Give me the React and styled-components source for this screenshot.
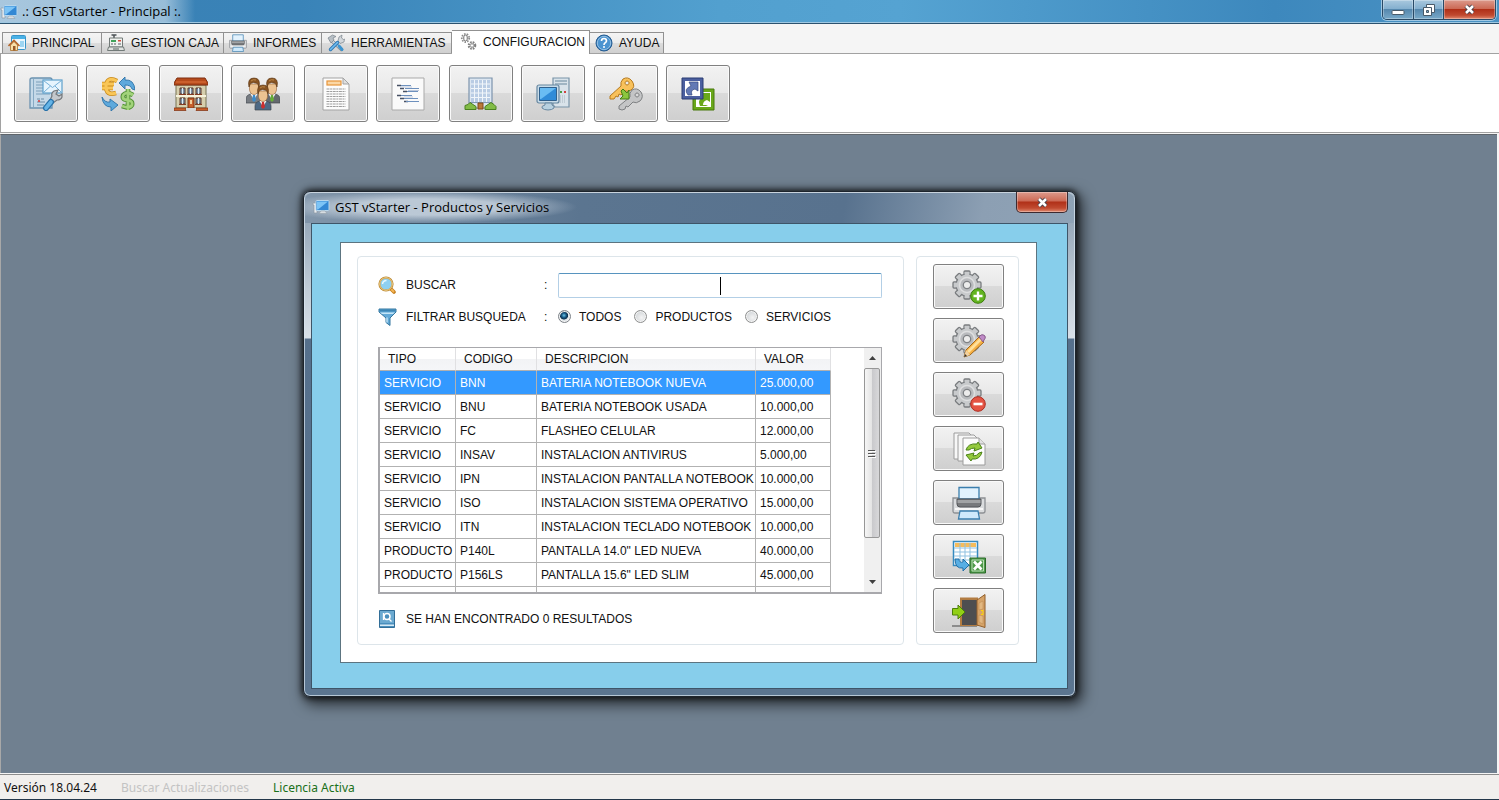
import { useState } from "react";
import styled, { createGlobalStyle, css } from "styled-components";

const GlobalStyle = createGlobalStyle`
  * {
    box-sizing: border-box;
  }

  body {
    margin: 0;
    font-family: Arial, "Liberation Sans", sans-serif;
    font-size: 12px;
    color: #111;
  }

  button,
  input {
    font: inherit;
  }

  svg {
    display: block;
    flex: none;
  }
`;

const Shell = styled.div`
  min-height: 100vh;
  display: flex;
  flex-direction: column;
  background: #f5f5f5;
  border-bottom: 1px solid #24374a;
`;

const TitleBar = styled.header`
  height: 24px;
  display: flex;
  align-items: flex-start;
  justify-content: space-between;
  padding-right: 3px;
  border-bottom: 1px solid #2b526f;
  box-shadow: inset 0 -1px 0 #9fc8e2;
  background:
    linear-gradient(90deg, rgba(215, 229, 240, 0.7) 0, rgba(215, 229, 240, 0.6) 165px, transparent 195px),
    linear-gradient(90deg, #3a80b3 0%, #3983b8 20%, #52a0cf 48%, #55a3d2 60%, #3d88bd 85%, #4b93c4 100%);
`;

const WindowTitle = styled.h1`
  margin: 0;
  display: flex;
  align-items: center;
  gap: 4px;
  height: 23px;
  font: 400 13px/23px "Open Sans", "Noto Sans", sans-serif;
  color: #000;
`;

const WindowControls = styled.div`
  display: flex;
  height: 20px;
  border: 1px solid #2a4a66;
  border-top: 0;
  border-radius: 0 0 5px 5px;
  box-shadow: 0 0 0 1px rgba(220, 238, 250, 0.6);
  overflow: hidden;
`;

const ControlButton = styled.button`
  width: ${(p) => (p.$close ? 52 : 30)}px;
  padding: 0;
  border: 0;
  border-left: ${(p) => (p.$first ? 0 : "1px solid #2a4a66")};
  display: grid;
  place-items: center;
  background: ${(p) =>
    p.$close
      ? "linear-gradient(#dc9a8c 0%, #cc6a55 45%, #b03018 50%, #c04a30 80%, #e08a70 100%)"
      : "linear-gradient(#a9c8de 0%, #85b0cf 45%, #5688ae 50%, #79a9c9 100%)"};
  box-shadow: inset 0 0 0 1px rgba(255, 255, 255, 0.3);
`;

const TabStrip = styled.nav`
  display: flex;
  align-items: flex-end;
  height: 30px;
  padding-left: 2px;
  border-bottom: 1px solid #a2a2a2;
`;

const Tab = styled.button`
  display: flex;
  align-items: center;
  gap: 6px;
  width: ${(p) => p.$width}px;
  height: 21px;
  padding: 0 0 0 5px;
  border: 1px solid #919191;
  border-left-width: ${(p) => (p.$first ? 1 : 0)}px;
  border-bottom: 0;
  background: linear-gradient(#f4f4f4 0%, #ececec 50%, #dcdcdc 51%, #d0d0d0 100%);
  color: #111;
  white-space: nowrap;

  ${(p) =>
    p.$active &&
    css`
      height: 24px;
      margin-bottom: -1px;
      padding: 0 0 2px 8px;
      background: #fff;
    `}
`;

const Toolbar = styled.div`
  background: #fff;
  padding: 11px 13px 10px;
  border-left: 1px solid #a2a2a2;
  border-bottom: 1px solid #a2a2a2;
`;

const ToolRow = styled.div`
  display: flex;
  justify-content: space-between;
  width: 716px;
  max-width: 100%;
`;

const GlossButton = styled.button`
  display: grid;
  place-items: center;
  padding: 0;
  border: 1px solid #808080;
  border-radius: 3px;
  box-shadow: inset 0 0 0 1px #fafafa;
  background: linear-gradient(#f2f2f2 0%, #e8e8e8 49%, #dadada 50%, #cfcfcf 100%);
`;

const ToolButton = styled(GlossButton)`
  width: 64px;
  height: 57px;
`;

const Desktop = styled.main`
  position: relative;
  flex: 1;
  margin: 1px 2px 1px 0;
  background: #708090;
  border-top: 1px solid #5f656b;
  border-left: 1px solid #a8a8a8;
  overflow: hidden;
`;

const StatusBar = styled.footer`
  display: flex;
  gap: 24px;
  height: 25px;
  padding-left: 4px;
  border-top: 1px solid #8c8c8c;
  background: #f1efed;
  font: 12px/25px "Noto Sans", "Open Sans", sans-serif;
`;

const StatusText = styled.span`
  color: ${(p) => p.$color};
`;

const Dialog = styled.section`
  position: absolute;
  left: 302px;
  top: 56px;
  width: 773px;
  padding: 0 7px 7px;
  border: 1px solid #1d242c;
  border-radius: 7px;
  background: linear-gradient(#8599ad 0, #c3ced8 100px, #d8e0e8 146px, #56708c 147px, #5b7590 100%);
  box-shadow:
    inset 0 0 0 1px rgba(220, 232, 242, 0.7),
    0 0 6px 1px rgba(0, 0, 0, 0.8),
    4px 5px 14px 3px rgba(0, 0, 0, 0.6);
`;

const DialogTitleBar = styled.div`
  display: flex;
  justify-content: space-between;
  align-items: flex-start;
  height: 31px;
  margin: 0 -6px;
  padding: 0 0 0 7px;
  border-radius: 6px 6px 0 0;
  box-shadow: inset 0 1px 0 #c8d3dd;
  background:
    radial-gradient(ellipse 150px 16px at 122px 15px, rgba(205, 216, 227, 0.8) 50%, transparent 100%),
    linear-gradient(100deg, #8296aa 0%, #5b7590 36%, #58728e 70%, #8c9fb3 88%, #8fa3b6 100%);
`;

const DialogTitle = styled(WindowTitle).attrs({ as: "h2" })`
  height: 30px;
  gap: 5px;
`;

const DialogClose = styled(ControlButton)`
  height: 21px;
  border: 1px solid #3c2a30;
  border-top: 0;
  border-radius: 0 0 5px 5px;
  margin-right: 6px;
`;

const Client = styled.div`
  padding: 18px 30px 25px 28px;
  border: 1px solid #3e5568;
  background: #87ceeb;
`;

const Panel = styled.div`
  display: flex;
  gap: 12px;
  padding: 13px 17px 17px 16px;
  border: 1px solid #5c7480;
  background: #fff;
`;

const Group = styled.div`
  border: 1px solid #dde5ea;
  border-radius: 4px;
`;

const SearchGroup = styled(Group)`
  flex: 1;
  min-width: 0;
  padding: 14px 21px 14px 20px;
`;

const ActionGroup = styled(Group)`
  display: flex;
  flex-direction: column;
  gap: 9px;
  padding: 7px 14px 11px 16px;
`;

const ActionButton = styled(GlossButton)`
  width: 71px;
  height: 45px;
`;

const FieldRow = styled.div`
  display: grid;
  grid-template-columns: 28px 138px 14px 1fr;
  align-items: center;
  height: ${(p) => p.$height}px;
`;

const FieldLabel = styled.label`
  white-space: nowrap;
`;

const SearchBox = styled.div`
  position: relative;
`;

const SearchInput = styled.input`
  display: block;
  width: 100%;
  height: 25px;
  padding: 0 4px;
  border: 1px solid #b3cfe6;
  border-top-color: #5794bf;
  border-radius: 2px;
  text-align: center;
  outline: 0;
  caret-color: transparent;
`;

const Caret = styled.span`
  position: absolute;
  left: 50%;
  top: 4px;
  width: 1px;
  height: 18px;
  background: #000;
`;

const RadioSet = styled.div`
  display: flex;
  gap: 13px;
`;

const RadioLabel = styled.label`
  display: flex;
  align-items: center;
  gap: 8px;
`;

const Radio = styled.input`
  appearance: none;
  width: 13px;
  height: 13px;
  margin: 0;
  border: 1px solid #8e8f8f;
  border-radius: 50%;
  box-shadow: inset 0 0 0 1px #f4f4f4;
  background: radial-gradient(circle at 60% 60%, #f4f4f4, #c4c9cd);

  &:checked {
    border-color: #7d8288;
    background: radial-gradient(circle at 45% 40%, #6cc6ea 0, #185a86 25%, #0c2f4c 42%, #dfe4e8 50%);
  }
`;

const GridBox = styled.div`
  display: flex;
  justify-content: space-between;
  height: 247px;
  margin-top: 13px;
  border: 1px solid #a8a8ac;
  border-width: 1px 1px 2px 2px;
  overflow: hidden;
`;

const Table = styled.table`
  width: 451px;
  table-layout: fixed;
  border-collapse: separate;
  border-spacing: 0;
  white-space: nowrap;
`;

const HeadCell = styled.th`
  width: ${(p) => p.$width}px;
  height: 23px;
  padding: 0 0 0 8px;
  text-align: left;
  font-weight: 400;
  border-right: 1px solid #e0e0e2;
  border-bottom: 1px solid #b0b0b0;
  background: linear-gradient(#fff 50%, #f2f3f5 51%, #f5f6f8 100%);
`;

const Row = styled.tr`
  background: ${(p) => (p.$selected ? "#3399ff" : "#fff")};
  color: ${(p) => (p.$selected ? "#fff" : "#111")};
`;

const Cell = styled.td`
  height: 24px;
  padding: 0 0 0 4px;
  border-right: 1px solid #b2b2b2;
  border-bottom: 1px solid #b2b2b2;
`;

const ScrollTrack = styled.div`
  display: flex;
  flex-direction: column;
  width: 17px;
  background: #f0f0f0;
`;

const ScrollArrow = styled.button`
  display: grid;
  place-items: center;
  width: 17px;
  height: 20px;
  padding: 0;
  border: 0;
  background: none;
`;

const ScrollThumb = styled.div`
  display: grid;
  place-items: center;
  height: 170px;
  margin: 0 1px auto 0;
  border: 1px solid #979797;
  border-radius: 2px;
  background: linear-gradient(90deg, #f6f6f6 0%, #e4e4e4 48%, #c9c9cc 52%, #d8d8da 100%);
`;

const Results = styled.div`
  display: flex;
  align-items: center;
  gap: 10px;
  height: 18px;
  margin-top: 16px;
`;

const ComputerIcon = () => (
  <svg width="18" height="16" viewBox="0 0 18 16">
    <path d="M1 4h4v10H2V6H1z" fill="#e8ecef" stroke="#8d99a3" strokeWidth=".7" />
    <rect x="4" y="1.5" width="13" height="10" rx="1" fill="#3388d4" stroke="#b7d6ec" />
    <path d="M5 2.500h11L6 10.500H5z" fill="#7cc4f6" />
    <path d="M9 12h4l2 2.500H7z" fill="#d7dde2" stroke="#8d99a3" strokeWidth=".5" />
  </svg>
);

const HomeIcon = () => (
  <svg width="18" height="18" viewBox="0 0 18 18">
    <rect x="3.500" y="1.500" width="14" height="14" rx="1" fill="#eaf6fd" stroke="#3794c9" />
    <path d="M4 2h13v3H4z" fill="#49b1e6" />
    <path d="M12 7h4v6h-4z" fill="#9dd5f2" />
    <path d="M2.500 11 6 7.500 9.500 11v5.500h-7z" fill="#f8dfa8" stroke="#a9702b" strokeWidth=".8" />
    <path d="m.5 12 5.500-5.500L11.500 12" fill="none" stroke="#b3652b" strokeWidth="1.600" />
    <path d="M5 12h2.500v4.500H5z" fill="#9a5a28" />
  </svg>
);

const RegisterIcon = () => (
  <svg width="18" height="18" viewBox="0 0 18 18">
    <path d="M4.500 1h5M7 1v3" stroke="#4c5256" strokeWidth="1.500" />
    <path d="M2.500 4h13v9h-13z" fill="#f0f2ef" stroke="#727a78" />
    <path d="M4 6h5v2H4z" fill="#41a35a" />
    <path d="M11 6h3v1.500h-3z" fill="#d14b3d" />
    <path d="M4 10h2m1 0h2m2 0h3" stroke="#566069" strokeWidth="1.200" />
    <path d="m1.500 13-1 3.500h17l-1-3.500z" fill="#dfe2e0" stroke="#727a78" />
    <path d="M6 15h6" stroke="#59635f" />
  </svg>
);

const PrinterIcon = ({ size = 34 }) => (
  <svg width={size} height={size} viewBox="0 0 34 34">
    <path d="M1 12h6v8h20v-8h6v13q0 2-2 2H3q-2 0-2-2z" fill="#dadcde" stroke="#8d9094" strokeWidth="1.300" />
    <path d="M7 1.500h20V13H7z" fill="#e2f2fd" stroke="#3b7ead" strokeWidth="1.300" />
    <path d="M5 13h24v5q0 3-3 3H8q-3 0-3-3z" fill="#77797c" stroke="#54575a" />
    <path d="M5.500 14h23v3h-23z" fill="#a1a3a5" />
    <path d="M3 22h28v2H3z" fill="#f7f7f7" />
    <path d="M8 25h18l1.500 8h-21z" fill="#cfe9fb" stroke="#3b7ead" strokeWidth="1.300" />
  </svg>
);

const ToolsIcon = () => (
  <svg width="18" height="18" viewBox="0 0 18 18">
    <path d="M4 6 14.500 15.500" stroke="#7e868d" strokeWidth="3.400" strokeLinecap="round" />
    <path d="M4 6 14.500 15.500" stroke="#d3d8dc" strokeWidth="2" />
    <path d="M1 4 5.500 1 9 2.500 6 4l1 2-3 3z" fill="#b8c0c6" stroke="#79838b" strokeWidth=".7" />
    <path d="m11 7 1-4 3-2-.5 3 2 1.500 1-.5-.5 3-4 1.500z" fill="#d3d8dc" stroke="#79838b" strokeWidth=".7" />
    <path d="m10.500 8.500-7 7" stroke="#2d77b3" strokeWidth="3.400" strokeLinecap="round" />
    <path d="m10.500 8.500-7 7" stroke="#72bef0" strokeWidth="1.600" strokeLinecap="round" />
    <path d="m12 12 3 3.500" stroke="#3c94d0" strokeWidth="3" strokeLinecap="round" />
  </svg>
);

const GearsIcon = () => (
  <svg width="17" height="17" viewBox="0 0 17 17" fill="none">
    <ellipse cx="5.500" cy="5" rx="3.700" ry="4" stroke="#8b8b8b" strokeWidth="1.800" strokeDasharray="1.500 1.200" />
    <ellipse cx="5.500" cy="5" rx="2" ry="3" fill="#e1e1e1" stroke="#8a8a8a" />
    <path d="M5.500 3v4" stroke="#fff" />
    <circle cx="12" cy="12.500" r="3" stroke="#808080" strokeWidth="2.600" strokeDasharray="1.500 .9" />
    <circle cx="12" cy="12.500" r="1.700" fill="#fff" stroke="#999" />
  </svg>
);

const HelpIcon = () => (
  <svg width="18" height="18" viewBox="0 0 18 18">
    <circle cx="9" cy="9" r="8" fill="#3579b7" stroke="#245b91" />
    <circle cx="9" cy="9" r="6.700" fill="#4a93d0" stroke="#a9d1ee" strokeWidth=".8" />
    <path d="M6.500 7q0-2.500 2.500-2.500T11.500 7q0 1-1.300 1.800Q9 9.500 9 11" fill="none" stroke="#fff" strokeWidth="1.600" />
    <circle cx="9" cy="13" r="1" fill="#fff" />
  </svg>
);

const ServerMailIcon = () => (
  <svg width="34" height="34" viewBox="0 0 34 34">
    <path d="M1 3q0-2 2-2h18q2 0 2 2v28H1z" fill="#c5d9e8" stroke="#6b92b0" strokeWidth="1.300" />
    <path d="M4.500 2v28" stroke="#87aac4" />
    <path d="M7 5h14M7 8h14M7 11h14M7 14h14M7 17h14" stroke="#7d9fb9" strokeWidth="1.200" />
    <path d="M8 22h3m1 0h3m-7 3h8m-8 3h7" stroke="#6d8da6" />
    <path d="M9 24h2" stroke="#d33" strokeWidth="1.500" />
    <rect x="14" y="3" width="19" height="13" fill="#e6f4fd" stroke="#5ea0cc" strokeWidth="1.200" />
    <path d="m14.500 3.500 9 7 9-7m-18 12 7-6.500m11 6.500L26 9" fill="none" stroke="#75b0d8" />
    <path
      d="m29 13-4 1q-3 2-2 5l-2 4 3 3 4-3q4 0 5-3v-3l-3 2-3-2z"
      fill="#c4c8cc"
      stroke="#75797d"
      strokeWidth="1.200"
    />
    <path d="m22 25-5 6" stroke="#2771a9" strokeWidth="6" strokeLinecap="round" />
    <path d="m22 25-5 6" stroke="#65b4e6" strokeWidth="3.600" strokeLinecap="round" />
  </svg>
);

const CurrencyIcon = () => (
  <svg width="34" height="34" viewBox="0 0 34 34" fill="none">
    <path d="M16 4Q6-1 5 9q0 10 10 7M1 7h12M1 11h11" stroke="#c98a1c" strokeWidth="4.600" />
    <path d="M16 4Q6-1 5 9q0 10 10 7M1 7h12M1 11h11" stroke="#f9c657" strokeWidth="3" />
    <path d="m18 6 6-6v3q9-1 10 10l-3-1q-1-4-7-4v4z" fill="#5ea9dc" stroke="#2c73a8" strokeWidth=".9" />
    <path d="M1 20q3 6 8 5v-3l8 6-7 6v-4Q2 30 1 20z" fill="#5ea9dc" stroke="#2c73a8" strokeWidth=".9" />
    <path d="M32 18q-3-2-6-2-5 1-4 5 1 2 5 2 5 1 4 5-2 4-10 1M27 12v21" stroke="#4f8f32" strokeWidth="4.600" />
    <path d="M32 18q-3-2-6-2-5 1-4 5 1 2 5 2 5 1 4 5-2 4-10 1M27 12v21" stroke="#a2d37b" strokeWidth="2.800" />
  </svg>
);

const HotelIcon = () => (
  <svg width="34" height="34" viewBox="0 0 34 34">
    <path d="M2 8h30v23H2z" fill="#d6cfae" stroke="#777253" />
    <path d="M2 19h30" stroke="#f6f2dc" strokeWidth="2" />
    <path d="M3 1h28l3 5v2H0V6z" fill="#b64b1c" stroke="#7e2f10" />
    <path d="M2 5h30" stroke="#e0753d" />
    <path d="M6 11h5v6H6zm8 0h5v6h-5zm8 0h5v6h-5zM6 21h5v6H6zm16 0h5v6h-5z" fill="#7c93a6" stroke="#5d3426" />
    <path d="M5 17.500h7m1 0h7m1 0h7M5 27.500h7m9 0h7" stroke="#843b21" />
    <path d="M8.500 11v6m8-6v6m8-6v6m-16 4v6m16-6v6" stroke="#e2edf3" />
    <path d="M14 21h6v10h-6z" fill="#c8602c" stroke="#793216" />
    <path d="M16 23h2v4h-2z" fill="#f1cd9e" />
    <path d="M0 31h12v2.500H0zm22 0h12v2.500H22z" fill="#c8602c" stroke="#7e2f10" strokeWidth=".7" />
    <path d="M12 31h10v2H12z" fill="#d8d8d8" />
  </svg>
);

const Person = ({ x, y, suit, tie }) => (
  <g transform={`translate(${x} ${y})`}>
    <path d="M1 25v-4q0-4 5-5h6q5 1 5 5v4z" fill={suit} stroke="#42474d" strokeWidth=".7" />
    <path d="m5.500 16 3.500 6 3.500-6z" fill="#f5f5f5" />
    <path d="M8 17h2l1 5-2 2-2-2z" fill={tie} />
    <path d="M4.500 6h9v6q-1 4.500-4.500 4.500T4.500 12z" fill="#ecc391" stroke="#94633a" strokeWidth=".6" />
    <path d="M4 9Q2 0 9 0t5 9l-1.500-3.500-4-1-3 1z" fill="#885422" stroke="#58330f" strokeWidth=".6" />
    <path d="M6 3q2-2 5-1" fill="none" stroke="#bd8847" />
  </g>
);

const PeopleIcon = () => (
  <svg width="34" height="34" viewBox="0 0 34 34">
    <Person x={-1} y={1} suit="#777c82" tie="#3b8bcb" />
    <Person x={17} y={1} suit="#64696e" tie="#66ad37" />
    <Person x={8} y={8} suit="#4d6985" tie="#cc2f2f" />
  </svg>
);

const DocumentIcon = () => (
  <svg width="34" height="34" viewBox="0 0 34 34">
    <path d="M4 1h20l6 6v26H4z" fill="#fcfcfc" stroke="#a3a3a3" />
    <path d="M24 1v6h6z" fill="#e0e0e0" stroke="#a3a3a3" />
    <rect x="8" y="4" width="14" height="4" fill="#fbd7a5" stroke="#e7943a" strokeWidth="1.200" />
    <path
      d="M7.500 12h19m-19 2.500h19m-19 2.500h19m-19 2.500h19m-19 2.500h19m-19 2.500h19m-19 2.500h19m-19 2.500h19"
      stroke="#9d9d9d"
      strokeDasharray="3 .6 2 .6"
    />
  </svg>
);

const CodeListIcon = () => (
  <svg width="34" height="34" viewBox="0 0 34 34">
    <path d="M1 1h32v32H1z" fill="#fafafa" stroke="#a9a9a9" />
    <g fill="none" strokeWidth="1.200">
      <path d="M6 8.500h4M9 11.500h4m3 3h-4M6 18.500h4m-1 3h4m0 3h4" stroke="#475164" strokeWidth="1.600" />
      <path d="M10 8.500h10m-6 3h14m-12 3h11M10 18.500h11m-8 3h14m-12 3h13" stroke="#6d90bd" />
      <path d="M9 10h12m-4 3.500h11m-15 6.500h9" stroke="#bcc8dc" />
    </g>
  </svg>
);

const BuildingIcon = () => (
  <svg width="34" height="34" viewBox="0 0 34 34">
    <path d="M5 1h23v30H5z" fill="#dce6f1" stroke="#7c93ac" strokeWidth="1.200" />
    <path d="M7 3h19v22H7z" fill="#b9cce4" />
    <path d="M10.500 3v22M14.500 3v22M18.500 3v22M22.500 3v22M7 7h19M7 11.500h19M7 16h19M7 20.500h19" stroke="#f0f5fa" />
    <path d="M5 25.500h23" stroke="#8299b2" />
    <path d="M14 26h5v6h-5z" fill="#bb7838" stroke="#7e4b1a" />
    <path d="M1 32.500v-4l3-1 2-2 3 2 3 2v3zm20 0v-3l3-2 3-2 3 2 2 2v3z" fill="#82bc46" stroke="#4b8120" />
  </svg>
);

const DesktopPcIcon = () => (
  <svg width="34" height="34" viewBox="0 0 34 34">
    <path d="M17 1h16v29H19l-2-2z" fill="#d9e3ea" stroke="#7893a7" strokeWidth="1.200" />
    <path d="M19 4h12M19 7h12" stroke="#8da6b7" strokeWidth="1.300" />
    <path d="M24 15h2" stroke="#449c45" strokeWidth="2" />
    <path d="M28 15h2" stroke="#d24141" strokeWidth="2" />
    <path d="M24 19h6m-6 2h6m-6 2h6m-6 2h6" stroke="#a7b6c0" strokeDasharray="1 1" />
    <rect x="1" y="8" width="22" height="18" rx="2" fill="#c9dce9" stroke="#6787a0" strokeWidth="1.200" />
    <path d="M3.500 10.500h17v13h-17z" fill="#2f8bd8" stroke="#30618d" />
    <path d="M4 11h16L5 22H4z" fill="#69bcf3" />
    <path d="M9 26h7v2q3 1 2 3-2 2-6 2t-6-2q-1-2 3-3z" fill="#b8d1e0" stroke="#6787a0" />
  </svg>
);

const KeysIcon = () => (
  <svg width="34" height="34" viewBox="0 0 34 34">
    <path
      fillRule="evenodd"
      d="M14 2q5-3 9 2 4 6-1 9-3 2-6 1l-4 4-2-1-1 3-2-1-2 3H1v-3L12 9q-1-4 2-7zm4 2a2 2 0 1 0 .1 0z"
      fill="#f8c15b"
      stroke="#b67a1e"
    />
    <path
      fillRule="evenodd"
      d="M23 13q5-3 9 2 3 5-1 9-4 3-7 1l-5 5-2-1-1 3-3 1-3-1v-3l11-9q-1-4 2-7zm5 3a2 2 0 1 0 .1 0z"
      fill="#c4c5c6"
      stroke="#7e8082"
    />
    <path d="m12 14 2-2 4 4 2-3v9h-9l3-3z" fill="#8cc63e" stroke="#457d13" />
  </svg>
);

const SwapIcon = () => (
  <svg width="34" height="34" viewBox="0 0 34 34">
    <path d="M12 12h21v21H12z" fill="#69a81a" stroke="#48780d" />
    <path d="M15 15h15v15H15z" fill="#fff" />
    <path d="M29 16v9l-3-2q-4 1-4 5h3l2 1h-8q-3-6 3-9l-3-4z" fill="#69a81a" />
    <path d="M1 1h21v21H1z" fill="#4b5f9f" stroke="#2b3c73" />
    <path d="M4 4h15v15H4z" fill="#fff" />
    <path d="M8 5h9v9l-3-2q-5 1-3 6H7q-5-6 3-9z" fill="#6279b5" stroke="#34477f" strokeWidth=".7" />
  </svg>
);

const GearShape = () => (
  <g>
    {[0, 45, 90, 135].map((angle) => (
      <rect
        key={angle}
        x="12"
        y="1"
        width="6"
        height="28"
        rx="1"
        fill="#c8cacc"
        stroke="#797c7f"
        strokeWidth="1.300"
        transform={`rotate(${angle} 15 15)`}
      />
    ))}
    <circle cx="15" cy="15" r="11" fill="#c8cacc" stroke="#797c7f" strokeWidth="1.200" />
    {[0, 45, 90, 135].map((angle) => (
      <rect
        key={angle}
        x="12.700"
        y="2"
        width="4.600"
        height="26"
        fill="#c8cacc"
        transform={`rotate(${angle} 15 15)`}
      />
    ))}
    <circle cx="15" cy="15" r="7.500" fill="#b9bbbe" stroke="#dedfe0" strokeWidth="1.500" />
    <circle cx="15" cy="15" r="3.700" fill="#ececec" stroke="#7e8184" strokeWidth="1.300" />
  </g>
);

const GearAddIcon = () => (
  <svg width="34" height="34" viewBox="0 0 34 34">
    <GearShape />
    <circle cx="26" cy="26" r="7.300" fill="#63b420" stroke="#3c7d0c" />
    <path d="M26 21.500v9M21.500 26h9" stroke="#fff" strokeWidth="2.400" />
  </svg>
);

const GearEditIcon = () => (
  <svg width="34" height="34" viewBox="0 0 34 34">
    <GearShape />
    <path d="m12 33 2-7L27 13l5 5-14 13z" fill="#f6b044" stroke="#a3691c" />
    <path d="m15 27 13-13 2 2-13 13z" fill="#ffe09a" />
    <path d="m27 13 2-2q2-1 4 1 1 2-1 4l-1 2z" fill="#bf8bc6" stroke="#865b8b" />
    <path d="m12 33 2-7 4 5z" fill="#f2d2a1" />
    <path d="m12 33 1-3 2 2z" fill="#333" />
  </svg>
);

const GearRemoveIcon = () => (
  <svg width="34" height="34" viewBox="0 0 34 34">
    <GearShape />
    <circle cx="26" cy="26" r="7.300" fill="#e45343" stroke="#ae2c20" />
    <path d="M21.500 26h9" stroke="#fff" strokeWidth="2.600" />
  </svg>
);

const RefreshPagesIcon = () => (
  <svg width="34" height="34" viewBox="0 0 34 34">
    <path d="M2 1h15l4 4v22H2z" fill="#f7f7f7" stroke="#9c9c9c" />
    <path d="M6 3h16l4 4v22H6z" fill="#f7f7f7" stroke="#9c9c9c" />
    <path d="M11 6h16l6 6v21H11z" fill="#fcfcfc" stroke="#9c9c9c" />
    <path d="M27 6v6h6" fill="#e2e2e2" stroke="#9c9c9c" />
    <path d="M14 18q2-7 11-6l1-2 4 6-8 3 1-3q-4 0-6 2z" fill="#94c93d" stroke="#4b8318" />
    <path d="M30 20q-2 8-10 7l-1 2-5-6 8-2-1 3q4 0 6-3z" fill="#94c93d" stroke="#4b8318" />
  </svg>
);

const ExcelExportIcon = () => (
  <svg width="34" height="34" viewBox="0 0 34 34">
    <path d="M1.500 1.500h24v24h-24z" fill="#fff" stroke="#368abf" strokeWidth="1.500" />
    <path d="M3 3h21v4H3z" fill="#f4bc5c" />
    <path d="M8 3v22M13 3v22M18 3v22M2 8h23M2 12h23M2 16h23M2 20h23" stroke="#8fc1e1" />
    <path d="M3 19h4q0 4 4 3v-3l6 6-6 6v-3q-8 1-8-9z" fill="#57aee4" stroke="#236fa6" />
    <path d="M18 18h15.500v15H18z" fill="#4f9a4a" stroke="#2b6b28" />
    <path d="M20 20h11.500v11H20z" fill="none" stroke="#b8ddb3" />
    <path d="m22 21.500 7.500 8m0-8-7.500 8" stroke="#fff" strokeWidth="2.600" />
  </svg>
);

const DoorIcon = () => (
  <svg width="34" height="34" viewBox="0 0 34 34">
    <path d="M0 32h25" stroke="#757575" strokeWidth="1.500" />
    <path d="M8 3.500h18V32H8z" fill="#b27c42" />
    <path d="M10 6h16v25H10z" fill="#4e4e50" />
    <path d="m25 6 8-5.500v33L25 31z" fill="#d6a368" stroke="#925f2b" />
    <path d="m27 9 4-2v8l-4 1zm0 12 4 1v8l-4-2z" fill="#e2b780" stroke="#bb874c" strokeWidth=".5" />
    <path d="M29 16.500h2v4h-2" fill="none" stroke="#ffd500" />
    <path d="M.5 14.500H6V11l7 7-7 7v-4H.5z" fill="#91cf16" stroke="#4c7f09" />
  </svg>
);

const SearchIcon = () => (
  <svg width="18" height="18" viewBox="0 0 18 18">
    <path d="m12 12 4 4" stroke="#c78120" strokeWidth="3.600" strokeLinecap="round" />
    <path d="m13 13 2.500 2.500" stroke="#f6b755" strokeWidth="1.800" strokeLinecap="round" />
    <circle cx="8" cy="8" r="6.600" fill="#8fd0f2" stroke="#ba862f" strokeWidth="2" />
    <circle cx="8" cy="8" r="6.300" fill="none" stroke="#f4d590" strokeWidth="1" />
    <path d="M4.500 8Q5 4.500 8.500 4.500" fill="none" stroke="#e8f8ff" strokeWidth="1.500" />
  </svg>
);

const FunnelIcon = () => (
  <svg width="19" height="18" viewBox="0 0 19 18">
    <path d="M1 1h17v3l-6 6v7.500l-4-3V10L1 4z" fill="#63aad8" stroke="#35779f" />
    <path d="M1.500 1.500h16v2h-16z" fill="#3d86b5" />
    <path d="M2 4.500h15l-2 1.500H4z" fill="#c5e6f8" />
    <path d="M9 9.500v5" stroke="#c5e6f8" strokeWidth="1.400" />
  </svg>
);

const ResultsIcon = () => (
  <svg width="18" height="18" viewBox="0 0 18 18">
    <path d="M1.500.5h15v17h-15z" fill="#4a8fbd" stroke="#326e98" />
    <path d="M2 1h14v12H2z" fill="#6caad1" />
    <path d="M2 14.500h14v1.500H2z" fill="#d8ebf6" />
    <circle cx="9" cy="6.500" r="3" fill="#4a8fbd" stroke="#fff" strokeWidth="1.500" />
    <path d="m11 9 2.500 2.500M5.500 3v7" stroke="#fff" strokeWidth="1.300" />
  </svg>
);

const CloseGlyph = () => (
  <svg width="13" height="11" viewBox="0 0 13 11">
    <path d="m3 2 7 7m0-7L3 9" stroke="#46404a" strokeWidth="4.400" />
    <path d="m3 2 7 7m0-7L3 9" stroke="#fff" strokeWidth="2.500" />
  </svg>
);

const MinimizeGlyph = () => (
  <svg width="14" height="12" viewBox="0 0 14 12">
    <rect x="1" y="6.500" width="12" height="4" rx="1" fill="#fff" stroke="#495a69" />
  </svg>
);

const RestoreGlyph = () => (
  <svg width="14" height="14" viewBox="0 0 14 14">
    <path d="M4.500 1.500h8v8h-8z" fill="#fff" stroke="#495a69" />
    <path d="M1.500 4.500h8v8h-8z" fill="#fff" stroke="#495a69" />
    <path d="M4.500 7.500h2v2h-2z" fill="#7ba8c8" stroke="#495a69" />
  </svg>
);

const ArrowGlyph = ({ down }) => (
  <svg width="7" height="4" viewBox="0 0 7 4">
    <path d={down ? "M0 0h7L3.500 4z" : "M0 4h7L3.500 0z"} fill="#404040" />
  </svg>
);

const GripGlyph = () => (
  <svg width="8" height="9" viewBox="0 0 8 9">
    <path d="M0 1.500h7m-7 3h7m-7 3h7" stroke="#555" />
    <path d="M1 2.500h7m-7 3h7m-7 3h7" stroke="#fff" />
  </svg>
);

const tabs = [
  { name: "PRINCIPAL", width: 100, icon: <HomeIcon /> },
  { name: "GESTION CAJA", width: 122, icon: <RegisterIcon /> },
  { name: "INFORMES", width: 98, icon: <PrinterIcon size={18} /> },
  { name: "HERRAMIENTAS", width: 130, icon: <ToolsIcon /> },
  { name: "CONFIGURACION", width: 138, icon: <GearsIcon /> },
  { name: "AYUDA", width: 74, icon: <HelpIcon /> },
];

const tools = [
  { name: "Servidor de correo", icon: <ServerMailIcon /> },
  { name: "Monedas", icon: <CurrencyIcon /> },
  { name: "Sucursales", icon: <HotelIcon /> },
  { name: "Usuarios", icon: <PeopleIcon /> },
  { name: "Documentos", icon: <DocumentIcon /> },
  { name: "Productos y Servicios", icon: <CodeListIcon /> },
  { name: "Empresa", icon: <BuildingIcon /> },
  { name: "Equipos", icon: <DesktopPcIcon /> },
  { name: "Claves", icon: <KeysIcon /> },
  { name: "Accesos directos", icon: <SwapIcon /> },
];

const actions = [
  { name: "Agregar", icon: <GearAddIcon /> },
  { name: "Editar", icon: <GearEditIcon /> },
  { name: "Eliminar", icon: <GearRemoveIcon /> },
  { name: "Actualizar", icon: <RefreshPagesIcon /> },
  { name: "Imprimir", icon: <PrinterIcon /> },
  { name: "Exportar a Excel", icon: <ExcelExportIcon /> },
  { name: "Salir", icon: <DoorIcon /> },
];

const columns = [
  { name: "TIPO", width: 76 },
  { name: "CODIGO", width: 81 },
  { name: "DESCRIPCION", width: 219 },
  { name: "VALOR", width: 75 },
];

const items = [
  ["SERVICIO", "BNN", "BATERIA NOTEBOOK NUEVA", "25.000,00"],
  ["SERVICIO", "BNU", "BATERIA NOTEBOOK USADA", "10.000,00"],
  ["SERVICIO", "FC", "FLASHEO CELULAR", "12.000,00"],
  ["SERVICIO", "INSAV", "INSTALACION ANTIVIRUS", "5.000,00"],
  ["SERVICIO", "IPN", "INSTALACION PANTALLA NOTEBOOK", "10.000,00"],
  ["SERVICIO", "ISO", "INSTALACION SISTEMA OPERATIVO", "15.000,00"],
  ["SERVICIO", "ITN", "INSTALACION TECLADO NOTEBOOK", "10.000,00"],
  ["PRODUCTO", "P140L", "PANTALLA 14.0\" LED NUEVA", "40.000,00"],
  ["PRODUCTO", "P156LS", "PANTALLA 15.6\" LED SLIM", "45.000,00"],
  ["", "", "", ""],
];

function ProductsDialog() {
  const [query, setQuery] = useState("");
  const [filter, setFilter] = useState("TODOS");
  const [selected, setSelected] = useState(0);

  return (
    <Dialog role="dialog" aria-labelledby="dialog-title">
      <DialogTitleBar>
        <DialogTitle id="dialog-title">
          <ComputerIcon />
          GST vStarter - Productos y Servicios
        </DialogTitle>
        <DialogClose $close aria-label="Cerrar">
          <CloseGlyph />
        </DialogClose>
      </DialogTitleBar>
      <Client>
        <Panel>
          <SearchGroup>
            <FieldRow $height={28}>
              <SearchIcon />
              <FieldLabel htmlFor="search">BUSCAR</FieldLabel>
              <span>:</span>
              <SearchBox>
                <SearchInput id="search" value={query} onChange={(e) => setQuery(e.target.value)} />
                {query === "" && <Caret />}
              </SearchBox>
            </FieldRow>
            <FieldRow $height={35} role="radiogroup" aria-labelledby="filter-label">
              <FunnelIcon />
              <span id="filter-label">FILTRAR BUSQUEDA</span>
              <span>:</span>
              <RadioSet>
                {["TODOS", "PRODUCTOS", "SERVICIOS"].map((name) => (
                  <RadioLabel key={name}>
                    <Radio
                      type="radio"
                      name="filter"
                      checked={filter === name}
                      onChange={() => setFilter(name)}
                    />
                    {name}
                  </RadioLabel>
                ))}
              </RadioSet>
            </FieldRow>
            <GridBox>
              <div>
                <Table>
                  <thead>
                    <tr>
                      {columns.map((col) => (
                        <HeadCell key={col.name} $width={col.width}>
                          {col.name}
                        </HeadCell>
                      ))}
                    </tr>
                  </thead>
                  <tbody>
                    {items.map((item, i) => (
                      <Row key={i} $selected={i === selected} onClick={() => setSelected(i)}>
                        {item.map((value, j) => (
                          <Cell key={j}>{value}</Cell>
                        ))}
                      </Row>
                    ))}
                  </tbody>
                </Table>
              </div>
              <ScrollTrack>
                <ScrollArrow aria-label="Subir">
                  <ArrowGlyph />
                </ScrollArrow>
                <ScrollThumb>
                  <GripGlyph />
                </ScrollThumb>
                <ScrollArrow aria-label="Bajar">
                  <ArrowGlyph down />
                </ScrollArrow>
              </ScrollTrack>
            </GridBox>
            <Results>
              <ResultsIcon />
              SE HAN ENCONTRADO 0 RESULTADOS
            </Results>
          </SearchGroup>
          <ActionGroup>
            {actions.map((action) => (
              <ActionButton key={action.name} aria-label={action.name}>
                {action.icon}
              </ActionButton>
            ))}
          </ActionGroup>
        </Panel>
      </Client>
    </Dialog>
  );
}

function App() {
  const [activeTab, setActiveTab] = useState("CONFIGURACION");

  return (
    <>
      <GlobalStyle />
      <Shell>
        <TitleBar>
          <WindowTitle>
            <ComputerIcon />
            .: GST vStarter - Principal :.
          </WindowTitle>
          <WindowControls>
            <ControlButton $first aria-label="Minimizar">
              <MinimizeGlyph />
            </ControlButton>
            <ControlButton aria-label="Restaurar">
              <RestoreGlyph />
            </ControlButton>
            <ControlButton $close aria-label="Cerrar">
              <CloseGlyph />
            </ControlButton>
          </WindowControls>
        </TitleBar>
        <TabStrip>
          {tabs.map((tab, i) => (
            <Tab
              key={tab.name}
              $width={tab.width}
              $first={i === 0}
              $active={tab.name === activeTab}
              onClick={() => setActiveTab(tab.name)}
            >
              {tab.icon}
              {tab.name}
            </Tab>
          ))}
        </TabStrip>
        <Toolbar>
          <ToolRow>
            {tools.map((tool) => (
              <ToolButton key={tool.name} aria-label={tool.name}>
                {tool.icon}
              </ToolButton>
            ))}
          </ToolRow>
        </Toolbar>
        <Desktop>
          <ProductsDialog />
        </Desktop>
        <StatusBar>
          <StatusText $color="#111">Versión 18.04.24</StatusText>
          <StatusText $color="#c3c3c3">Buscar Actualizaciones</StatusText>
          <StatusText $color="#1a701a">Licencia Activa</StatusText>
        </StatusBar>
      </Shell>
    </>
  );
}

export default App;
